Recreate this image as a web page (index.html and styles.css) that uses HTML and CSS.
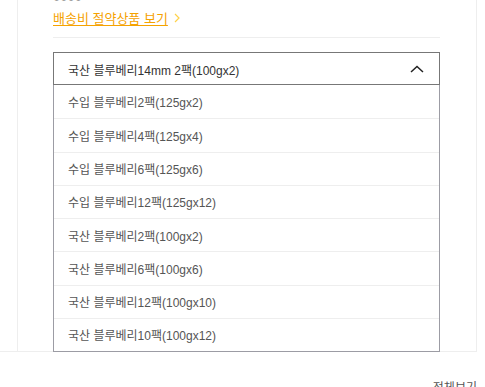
FILE: index.html
```html
<!DOCTYPE html>
<html lang="ko">
<head>
    <meta charset="UTF-8">
    <title>옵션 선택</title>
    <link rel="stylesheet" href="styles.css">
</head>
<body>
    <div class="wrap">
        <div class="panel">
            <div class="price">0000</div>
            <div class="save-link">
                <a href="#">배송비 절약상품 보기</a>
                <svg class="link-arrow" width="6" height="10" viewBox="0 0 6 10"><polyline points="1,1 5,5 1,9" fill="none" stroke="#ffd24a" stroke-width="1.2"/></svg>
            </div>
            <div class="divider"></div>

            <div class="select">
                <div class="select-head">
                    <span>국산 블루베리14mm 2팩(100gx2)</span>
                    <svg class="caret" width="14" height="8" viewBox="0 0 14 8"><polyline points="1,7 7,1.5 13,7" fill="none" stroke="#222" stroke-width="1.5"/></svg>
                </div>
                <ul class="options">
                    <li>수입 블루베리2팩(125gx2)</li>
                    <li>수입 블루베리4팩(125gx4)</li>
                    <li>수입 블루베리6팩(125gx6)</li>
                    <li>수입 블루베리12팩(125gx12)</li>
                    <li>국산 블루베리2팩(100gx2)</li>
                    <li>국산 블루베리6팩(100gx6)</li>
                    <li>국산 블루베리12팩(100gx10)</li>
                    <li>국산 블루베리10팩(100gx12)</li>
                </ul>
            </div>
        </div>
    </div>
    <div class="more">전체보기</div>
</body>
</html>
```

FILE: styles.css
```css
body {
    margin: 0;
    font-family: "Liberation Sans", "Noto Sans CJK KR", sans-serif;
    font-size: 13px;
    color: #555;
    background-color: #fff;
    overflow: hidden;
}
.wrap {
    width: 477px;
    border-bottom: 1px solid #eee;
}
.panel {
    margin-left: 17px;
    border-left: 1px solid #eee;
    border-right: 1px solid #eee;
    padding: 0 36px 0 35px;
}
.price {
    margin-top: -11px;
    height: 16px;
    line-height: 16px;
    color: #999;
}
.save-link {
    display: flex;
    align-items: center;
    gap: 6px;
    margin-top: 3px;
    height: 18px;
}
.save-link a {
    color: #f5a200;
    text-decoration: underline;
    text-underline-offset: 2px;
}
.link-arrow {
    margin-top: 2px;
}
.divider {
    height: 1px;
    background-color: #eee;
    margin-top: 11px;
}
.select {
    margin-top: 14px;
    margin-bottom: -1px;
    font-size: 12px;
}
.select-head {
    height: 33px;
    box-sizing: border-box;
    border: 1px solid #777;
    display: flex;
    align-items: center;
    justify-content: space-between;
    padding: 1px 15px 0 14px;
    color: #333;
}
.caret {
    margin-top: -1px;
}
.options {
    list-style: none;
    margin: 0;
    padding: 0;
    border: 1px solid #9c9ca4;
    border-top: none;
}
.options li {
    height: 33.25px;
    box-sizing: border-box;
    display: flex;
    align-items: center;
    padding-left: 14px;
    color: #555;
}
.options li + li {
    border-top: 1px solid #eee;
}
.more {
    width: 477px;
    text-align: right;
    padding-top: 26px;
    font-size: 12px;
    color: #555;
}
```
